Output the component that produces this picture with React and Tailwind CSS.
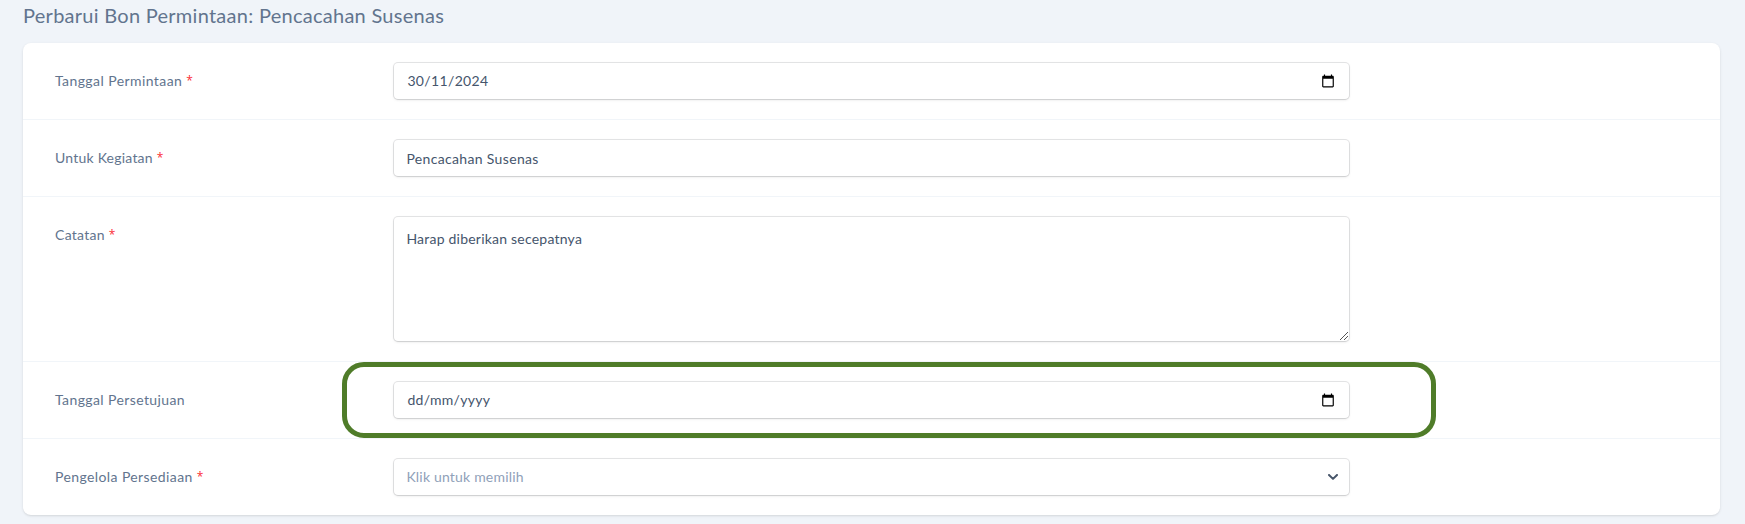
function CalendarIcon() {
  return (
    <svg className="mr-[13.5px] mb-px h-[14px] w-[14px]" viewBox="0 0 24 24" aria-hidden="true">
      <path
        d="M20 3h-1V1h-2v2H7V1H5v2H4c-1.100 0-2 .9-2 2v16c0 1.100.9 2 2 2h16c1.100 0 2-.9 2-2V5c0-1.100-.9-2-2-2zm0 18H4V8h16v13z"
        fill="#000"
      />
    </svg>
  );
}

function ChevronIcon() {
  return (
    <svg className="mr-[11px] h-[6px] w-[10px]" viewBox="0 0 10 6" aria-hidden="true">
      <path d="M1 1l4 3.900L9 1" fill="none" stroke="#475569" strokeWidth="2" strokeLinecap="round" strokeLinejoin="round" />
    </svg>
  );
}

function ResizeHandle() {
  return (
    <svg className="mr-[1px] mb-[1px] h-[8px] w-[8px] self-end" viewBox="0 0 8 8" shapeRendering="crispEdges" aria-hidden="true">
      {[0, 1, 2, 3, 4, 5, 6, 7].map((i) => (
        <rect key={i} x={i} y={7 - i} width="1" height="1" fill="#555" />
      ))}
      {[4, 5, 6, 7].map((i) => (
        <rect key={i} x={i} y={11 - i} width="1" height="1" fill="#555" />
      ))}
    </svg>
  );
}

function Row({ label, spacing, required, children }) {
  return (
    <div className="flex py-5">
      <div className="flex w-1/5 items-start gap-[4px] px-8 pt-[7px]">
        <span className={`text-[14px] leading-[22px] whitespace-nowrap ${spacing}`}>{label}</span>
        {required && <span className="font-['Open_Sans',sans-serif] text-[12px] leading-[22px] text-red-500">*</span>}
      </div>
      <div className="w-3/5 px-8">{children}</div>
    </div>
  );
}

function Control({ className = "h-9 items-center", children }) {
  return (
    <div className={`flex justify-between rounded bg-white pl-3 text-[14px] leading-[22px] text-slate-600 shadow ring-1 ring-gray-950/10 ${className}`}>
      {children}
    </div>
  );
}

export default function App() {
  return (
    <main className="h-[524px] overflow-hidden bg-[#f0f4f9] pr-[25px] pl-[23px] font-['Lato',sans-serif] text-slate-500">
      <h1 className="h-[43px] pt-px text-[20px] leading-[28px] font-normal tracking-[0.27px] whitespace-nowrap">
        Perbarui Bon Permintaan: Pencacahan Susenas
      </h1>
      <div className="divide-y divide-slate-100 rounded-lg bg-white shadow">
        <Row label="Tanggal Permintaan" spacing="tracking-[0.42px]" required>
          <Control>
            <span className="pb-px pl-[1px] tracking-[0.35px]">30/11/2024</span>
            <CalendarIcon />
          </Control>
        </Row>
        <Row label="Untuk Kegiatan" spacing="tracking-[0.22px]" required>
          <Control>
            <span className="pt-px tracking-[0.34px]">Pencacahan Susenas</span>
          </Control>
        </Row>
        <Row label="Catatan" spacing="tracking-[0.28px]" required>
          <Control className="h-[124px] items-start">
            <span className="pt-[11px] tracking-[0.22px]">Harap diberikan secepatnya</span>
            <ResizeHandle />
          </Control>
        </Row>
        <div className="relative">
          <Row label="Tanggal Persetujuan" spacing="tracking-[0.4px]">
            <Control>
              <span className="pb-px pl-[1px] tracking-[0.3px]">dd/mm/yyyy</span>
              <CalendarIcon />
            </Control>
          </Row>
          <div className="pointer-events-none absolute top-0 left-[319px] h-[76px] w-[1094px] rounded-[22px] border-5 border-[#4f7c29]" />
        </div>
        <Row label="Pengelola Persediaan" spacing="tracking-[0.4px]" required>
          <Control>
            <span className="pb-px tracking-[0.19px] text-slate-400">Klik untuk memilih</span>
            <ChevronIcon />
          </Control>
        </Row>
      </div>
    </main>
  );
}
